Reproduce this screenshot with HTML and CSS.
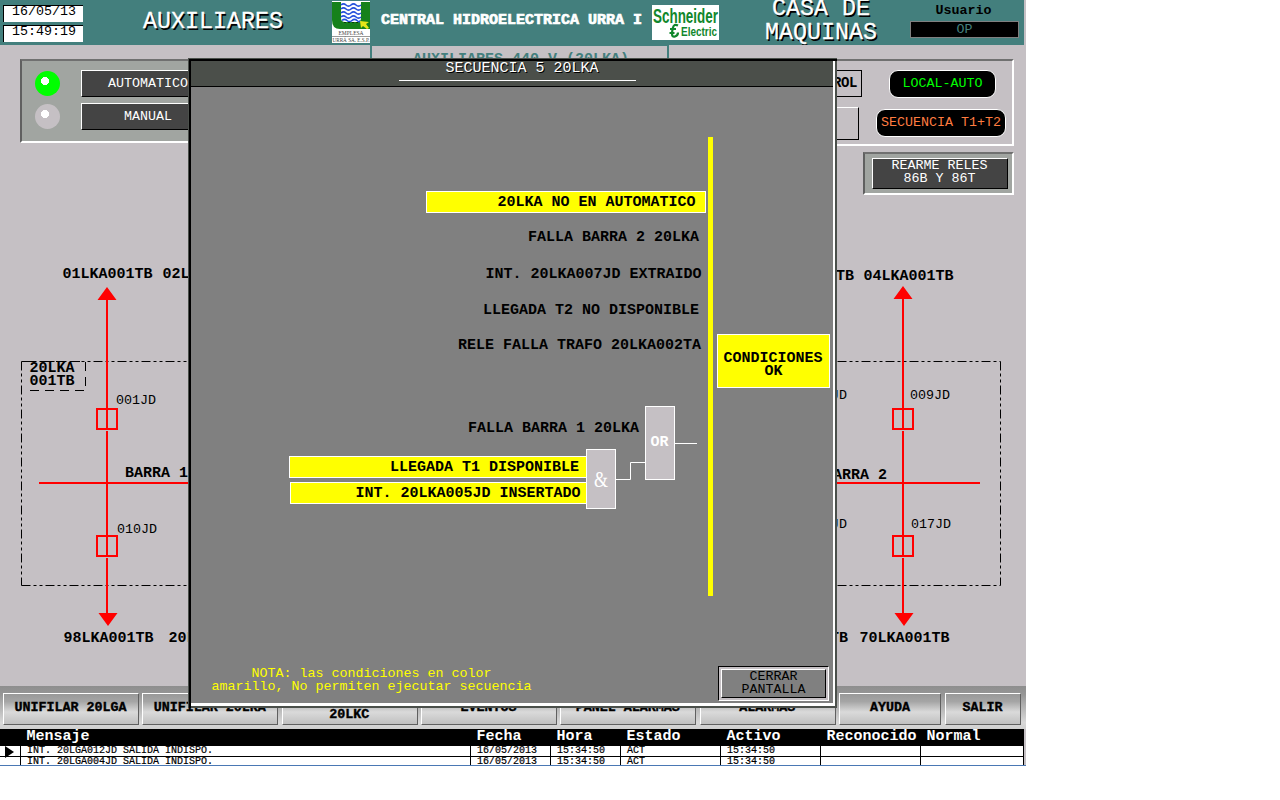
FILE: index.html
```html
<!DOCTYPE html>
<html lang="es">
<head>
<meta charset="utf-8">
<title>Central Hidroelectrica Urra I - Auxiliares</title>
<link rel="stylesheet" href="styles.css">
</head>
<body>
<div class="app">
  <header class="header">
    <div class="clock"><div class="clock-box">16/05/13</div><div class="clock-box">15:49:19</div></div>
    <h1 class="area">AUXILIARES</h1>
    <svg class="logo-urra" width="38" height="42" viewBox="0 0 38 42">
      <rect width="38" height="42" fill="#fff"/>
      <path d="M0 1H38V28H8Q0 28 0 19Z" fill="#16811b"/>
      <path d="M9 1H29V17Q29 21 25 21H13Q9 21 9 17Z" fill="#fff"/>
      <g fill="none" stroke="#2450dc" stroke-width="1.6">
        <path d="M9 4q2.500-2.400 5 0t5 0 5 0 5 0"/>
        <path d="M9 8q2.500-2.400 5 0t5 0 5 0 5 0M9 12q2.500-2.400 5 0t5 0 5 0 5 0M9 16q2.500-2.400 5 0t5 0 5 0 5 0M10 19.500q2.500-2.400 5 0t5 0 5 0 3 0"/>
      </g>
      <path d="M12 21.500h16" stroke="#083c0a" stroke-dasharray="2 2"/>
      <path d="M28 20l9 1-3 2 3 4-2 1-4-3-2 2z" fill="#e6e619"/>
      <text x="6.500" y="34" class="urra-name" textLength="25" lengthAdjust="spacingAndGlyphs">EMPLESA</text>
      <path d="M0 35.500H38" stroke="#999"/>
      <text x="0.500" y="41.300" class="urra-name" textLength="37" lengthAdjust="spacingAndGlyphs">URRÁ SA. E.S.P.</text>
    </svg>
    <div class="plant">CENTRAL HIDROELECTRICA URRA I</div>
    <svg class="logo-schneider" width="67" height="35" viewBox="0 0 67 35">
      <rect width="67" height="35" fill="#fff"/>
      <text x="1" y="17.500" class="sch-a" textLength="65" lengthAdjust="spacingAndGlyphs">Schneider</text>
      <text x="29" y="31" class="sch-b" textLength="36" lengthAdjust="spacingAndGlyphs">Electric</text>
      <path d="M26 20.500q-4-2-5 2t-1 6q0 4 3 3t3-4M18 24h6M17.500 28h5" fill="none" stroke="#11872c" stroke-width="2.200"/>
    </svg>
    <h2 class="site">CASA DE<br>MAQUINAS</h2>
    <div class="user"><div class="user-label">Usuario</div><div class="user-box">OP</div></div>
  </header>

  <main class="mimic">
    <svg class="mimic-lines" width="1026" height="641" viewBox="0 45 1026 641">
      <path d="M371 45V62M668 45V62" stroke="#437f7d" stroke-width="2"/>
      <path d="M370 45.500H669" stroke="#437f7d"/>
      <text x="413" y="63" class="t-bold teal">AUXILIARES 440 V (20LKA)</text>
      <path d="M21.500 361.500H1000.500M1000.500 361.500V585.500M21.500 585.500H1000.500M21.500 361.500V585.500" class="frame"/>
      <path d="M26 361.500H85.500V390.500H26" class="tag"/>
      <g class="bus">
        <path d="M39 483H500M500 483H980M107 299V429M107 431V556M107 558V614M903 299V429M903 431V556M903 558V614"/>
        <path d="M97 409h20v20h-20zM97 536h20v20h-20zM893 409h20v20h-20zM893 536h20v20h-20z"/>
      </g>
      <path d="M107 287l9.500 13h-19zM108 626l-9.500-13h19zM903 286l9.500 13h-19zM904 626l-9.500-13h19z" fill="#f00"/>
      <g class="t-bold">
        <text x="62.500" y="278">01LKA001TB</text><text x="162.500" y="278">02LKA001TB</text>
        <text x="764" y="280">03LKA001TB</text><text x="863.500" y="280">04LKA001TB</text>
        <text x="29.500" y="372">20LKA</text><text x="29.500" y="385">001TB</text>
        <text x="125" y="477">BARRA 1</text><text x="824" y="479">BARRA 2</text>
        <text x="63.500" y="642">98LKA001TB</text><text x="168.500" y="642">20LKA001TB</text>
        <text x="758" y="642">60LKA001TB</text><text x="859.500" y="642">70LKA001TB</text>
      </g>
      <g class="t-thin">
        <text x="116" y="404">001JD</text><text x="117" y="533">010JD</text>
        <text x="807" y="399">008JD</text><text x="910" y="399">009JD</text>
        <text x="807" y="528">016JD</text><text x="911" y="528">017JD</text>
      </g>
    </svg>
    <section class="panel mode">
      <div class="mode-row"><i class="lamp on"></i><button class="dark">AUTOMATICO</button></div>
      <div class="mode-row"><i class="lamp"></i><button class="dark">MANUAL</button></div>
    </section>
    <section class="right">
      <div class="status">
        <div class="status-row"><span class="caption">CONTROL</span><span class="pill local">LOCAL-AUTO</span></div>
        <div class="status-row second"><span class="caption blank"></span><span class="pill seq">SECUENCIA T1+T2</span></div>
      </div>
      <div class="panel reset"><button class="dark two">REARME RELES<br>86B Y 86T</button></div>
    </section>
  </main>

  <nav class="nav">
    <button class="n-a">UNIFILAR 20LGA</button><button class="n-a">UNIFILAR 20LKA</button><button class="n-a">UNIFILAR<br>20LKC</button><button class="n-a">EVENTOS</button><button class="n-a">PANEL ALARMAS</button><button class="n-a">ALARMAS</button><button class="n-d">AYUDA</button><button class="n-e">SALIR</button>
  </nav>

  <section class="log">
    <div class="log-row log-head"><span></span><span>Mensaje</span><span>Fecha</span><span>Hora</span><span>Estado</span><span>Activo</span><span>Reconocido</span><span>Normal</span></div>
    <div class="log-row"><span class="mark"><svg width="9" height="12" viewBox="0 0 9 12"><path d="M0 0l9 6-9 6z"/></svg></span><span>INT. 20LGA012JD SALIDA INDISPO.</span><span>16/05/2013</span><span>15:34:50</span><span>ACT</span><span>15:34:50</span><span></span><span></span></div>
    <div class="log-row"><span></span><span>INT. 20LGA004JD SALIDA INDISPO.</span><span>16/05/2013</span><span>15:34:50</span><span>ACT</span><span>15:34:50</span><span></span><span></span></div>
  </section>

  <div class="dialog">
    <div class="dialog-title"><span>SECUENCIA 5 20LKA</span></div>
    <svg class="logic" width="642" height="579" viewBox="191 87 642 579">
      <path d="M710.500 137V596" stroke="#ff0" stroke-width="5"/>
      <g fill="#ff0" stroke="#fff">
        <rect x="426.500" y="191.500" width="279" height="21"/>
        <rect x="289.500" y="456.500" width="297" height="21"/>
        <rect x="290.500" y="482.500" width="296" height="21"/>
        <rect x="717.500" y="334.500" width="112" height="53"/>
      </g>
      <g fill="#c5c0c4" stroke="#fff">
        <rect x="586.500" y="449.500" width="29" height="59"/>
        <rect x="645.500" y="406.500" width="29" height="73"/>
      </g>
      <path d="M616 479.500H630.500V462.500H645M675 443.500H697" fill="none" stroke="#fff"/>
      <g class="t-bold">
        <text x="497.500" y="206">20LKA NO EN AUTOMATICO</text>
        <text x="528" y="241">FALLA BARRA 2 20LKA</text>
        <text x="485.500" y="278">INT. 20LKA007JD EXTRAIDO</text>
        <text x="483" y="314">LLEGADA T2 NO DISPONIBLE</text>
        <text x="458" y="349">RELE FALLA TRAFO 20LKA002TA</text>
        <text x="723.500" y="362">CONDICIONES</text><text x="764.500" y="375">OK</text>
        <text x="468" y="432">FALLA BARRA 1 20LKA</text>
        <text x="390" y="471">LLEGADA T1 DISPONIBLE</text>
        <text x="355.500" y="497">INT. 20LKA005JD INSERTADO</text>
        <text x="650.500" y="446" class="white">OR</text>
      </g>
      <text x="594" y="487" class="amp">&amp;</text>
    </svg>
    <div class="dialog-foot">
      <p class="note">NOTA: las condiciones en color<br>amarillo, No permiten ejecutar secuencia</p>
      <div class="close"><button>CERRAR<br>PANTALLA</button></div>
    </div>
  </div>
</div>
</body>
</html>
```
FILE: styles.css
```css
* { box-sizing: border-box; }
body { margin: 0; background: #fff; }
body, button { font-family: "Liberation Mono", monospace; font-size: 13.33px; }
h1, h2, p { margin: 0; font-weight: normal; }
button { display: block; padding: 0; border-radius: 0; text-align: center; white-space: nowrap; }

.app { position: relative; width: 1026px; height: 766px; overflow: hidden; background: #c5c0c4; }
.app::after { content: ""; position: absolute; left: 0; right: 0; bottom: 0; height: 1px; background: #4a78b4; }

.header { display: grid; grid-template-columns: 143px 189px 49px 271px 100px 138px 134px; width: 1024px; height: 45px; overflow: hidden; background: #437f7d; color: #fff; }
.clock { display: flex; flex-direction: column; gap: 3px; padding: 5px 0 0 3px; }
.clock-box { width: 80px; height: 17px; padding-left: 8px; background: #fff; border: solid #000; border-width: 1px 0 0 1px; color: #000; line-height: 12px; }
.area, .site { font-size: 23.33px; text-shadow: 1.500px 1.500px 0 #000; -webkit-text-stroke: .3px #fff; }
.area { line-height: 44px; }
.site { margin-top: -3px; line-height: 24px; text-align: center; }
.logo-urra { margin-top: 1px; }
.urra-name { font: 5.500px "Liberation Serif", serif; fill: #444; }
.plant { font-size: 15px; font-weight: bold; line-height: 42px; -webkit-text-stroke: .7px #fff; white-space: nowrap; }
.logo-schneider { margin-top: 5px; }
.sch-a { font: bold 20px "Liberation Sans", sans-serif; fill: #11872c; }
.sch-b { font: bold 13.500px "Liberation Sans", sans-serif; fill: #11872c; }
.user { padding: 3px 5px 0 20px; text-align: center; }
.user-label { height: 18px; padding-right: 2px; line-height: 16px; color: #000; font-weight: bold; }
.user-box { height: 17px; background: #000; border: 1px solid #808080; color: #437f7d; line-height: 15px; }

.mimic { position: relative; display: flex; height: 641px; padding: 14px 12px 0 20px; justify-content: space-between; align-items: flex-start; }
.mimic-lines { position: absolute; left: 0; top: 0; }
.t-bold { font-weight: bold; font-size: 15px; }
.teal { fill: #437f7d; }
.t-thin { font-size: 13.33px; }
.frame { fill: none; stroke: #000; stroke-dasharray: 9 3 3 3 3 3; }
.tag { fill: none; stroke: #000; stroke-dasharray: 9 6; }
.bus { fill: none; stroke: #f00; stroke-width: 2; }

.panel { position: relative; background: #a1a5a1; border-style: solid; border-color: #707070 #fff #fff #606060; }
.mode { width: 230px; height: 84px; border-width: 2px; padding: 9px 0 0 13px; display: flex; flex-direction: column; gap: 6px; }
.mode-row { display: flex; gap: 21px; align-items: center; }
.lamp { width: 25px; height: 25px; border-radius: 50%; background: radial-gradient(circle at 10px 10px, #fff 3.800px, #c5c0c4 4.200px); }
.lamp.on { background: radial-gradient(circle at 10px 10px, #fff 3.800px, #0f0 4.200px); }
.dark { width: 134px; height: 27px; background: #444; border: 1px solid #000; border-top-color: #fff; border-left-color: #fff; color: #fff; line-height: 24px; }
.right { position: relative; width: 414px; }
.status { height: 87px; padding: 8px 7px 0 0; border: 2px solid #fff; border-top-color: #707070; }
.status-row { display: flex; justify-content: flex-end; align-items: center; gap: 27px; height: 29px; padding-right: 9px; }
.second { height: 34px; margin: 8px -1px 0 0; padding-right: 0; gap: 17px; }
.caption { width: 72px; height: 27px; border: 1px solid #000; font-weight: bold; font-size: 14px; line-height: 25px; text-align: right; padding-right: 4px; letter-spacing: -.4px; }
.blank { height: 33px; border-top-color: #fff; }
.pill { height: 28px; border: 1px solid #fff; border-radius: 9px; background: #000; text-align: center; line-height: 26px; }
.local { width: 107px; color: #0f0; }
.seq { width: 130px; color: #ff7c40; }
.reset { width: 151px; height: 43px; margin: 6px 0 0 auto; border-width: 2px; padding: 4px 0 0 7px; }
.two { width: 136px; height: 31px; line-height: 13px; padding-bottom: 3px; padding-right: 1px; }

.nav { display: flex; height: 43px; padding: 7px 0 0 3px; background: linear-gradient(#8e8e8e, #969696 20%, #d8d8d8 85%, #d0d0d0); }
.nav button { height: 32px; border: 1px solid #606060; border-top-color: #fff; border-left-color: #fff; background: linear-gradient(#999, #a5a5a5 25%, #dadada 60%, #c0c0c0); color: #000; font-weight: bold; -webkit-text-stroke: .4px #000; line-height: 14px; padding-bottom: 2px; }
.nav .n-a { width: 136px; margin-right: 3.330px; padding-right: 1px; }
.nav .n-d { width: 102px; margin-right: 4px; }
.nav .n-e { width: 76px; padding-right: 1px; }

.log { height: 37px; width: 1024px; background: #fff; overflow: hidden; }
.log-row { display: grid; grid-template-columns: 21px 450px 80px 70px 100px 100px 100px 103px; height: 11px; }
.log-row span { border-right: 1px solid #000; border-bottom: 1px solid #000; font-size: 10px; line-height: 10px; padding-left: 6px; height: 11px; -webkit-text-stroke: .2px #000; }
.log-row .mark { padding: 0 0 0 5px; }
.mark svg { display: block; }
.log-head { height: 17px; background: #000; color: #fff; }
.log-head span { font-size: 15px; line-height: 16px; font-weight: bold; height: 17px; padding-left: 5.500px; -webkit-text-stroke: 0; }

.dialog { position: absolute; left: 188px; top: 58px; width: 649px; height: 650px; padding: 3px 0 0 3px; background: #808080; box-shadow: inset 1px 1px 0 #4b504b, inset 3px 3px 0 #000, inset -2px -2px 0 #4b504b, inset -4px -5px 0 #fff; }
.dialog-title { width: 642px; height: 26px; background: #4b4f4a; border-bottom: 1px solid #000; text-align: center; color: #fff; font-size: 15px; line-height: 15px; text-shadow: 1px 1px 0 #000; padding-left: 10px; }
.dialog-title span { display: block; width: 237px; height: 20px; margin-left: 198px; border-bottom: 1px solid #fff; padding-left: 9px; }
.logic { display: block; }
.amp { font: 23px "Liberation Serif", serif; fill: #fff; transform-box: fill-box; transform: scaleX(.78); }
.white { fill: #fff; }
.dialog-foot { display: flex; justify-content: space-between; width: 638px; }
.note { width: 361px; padding-top: 1px; color: #ff0; line-height: 13px; text-align: center; }
.close { width: 111px; height: 35px; border: 1px solid #fff; border-top-color: #000; border-left-color: #000; background: #c5c0c4; padding: 2px; }
.close button { width: 105px; height: 29px; background: #808080; border: 1px solid #000; border-top-color: #fff; border-left-color: #fff; color: #000; line-height: 13px; padding-bottom: 2px; }
```
